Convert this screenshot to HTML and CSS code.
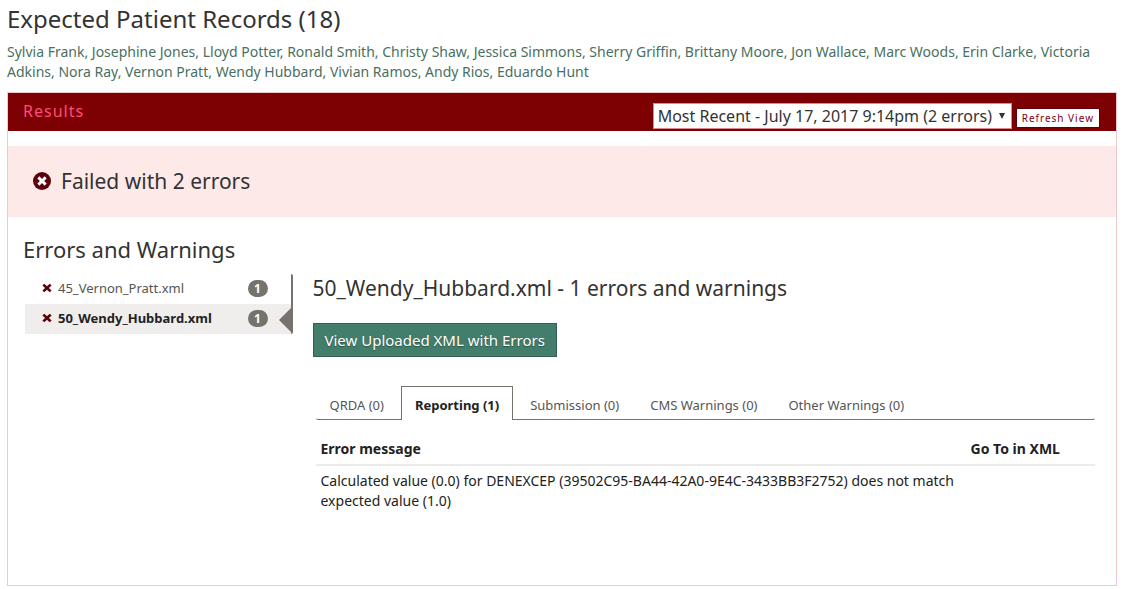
FILE: index.html
```html
<!DOCTYPE html>
<html lang="en">
<head>
  <meta charset="UTF-8">
  <meta name="viewport" content="width=device-width,initial-scale=1">
  <title>Test Execution Results</title>
  <link rel="stylesheet" href="styles.css">
</head>
<body>
  <svg class="sprite" aria-hidden="true">
    <symbol id="icon-times" viewBox="0 0 10 10">
      <path d="M2.3 .7 5 3.2 7.7 .7 9.6 2.4 6.9 5 9.6 7.6 7.7 9.3 5 6.8 2.3 9.3 .4 7.6 3.1 5 .4 2.4z"/>
    </symbol>
  </svg>

  <h1>Expected Patient Records (18)</h1>
  <p class="patients">
    <a href="#">Sylvia Frank</a>, <a href="#">Josephine Jones</a>, <a href="#">Lloyd Potter</a>, <a href="#">Ronald Smith</a>, <a href="#">Christy Shaw</a>, <a href="#">Jessica Simmons</a>, <a href="#">Sherry Griffin</a>, <a href="#">Brittany Moore</a>, <a href="#">Jon Wallace</a>, <a href="#">Marc Woods</a>, <a href="#">Erin Clarke</a>, <a href="#">Victoria Adkins</a>, <a href="#">Nora Ray</a>, <a href="#">Vernon Pratt</a>, <a href="#">Wendy Hubbard</a>, <a href="#">Vivian Ramos</a>, <a href="#">Andy Rios</a>, <a href="#">Eduardo Hunt</a>
  </p>

  <section class="panel">
    <header class="panel-heading">
      <h2 class="panel-title">Results</h2>
      <form class="panel-controls">
        <div class="select-wrap">
          <select class="execution-select" aria-label="Test execution">
            <option>Most Recent - July 17, 2017 9:14pm (2 errors)</option>
          </select>
        </div>
        <button type="button" class="btn-refresh">Refresh View</button>
      </form>
    </header>

    <div class="status-banner">
      <svg class="status-icon" viewBox="0 0 18 18" aria-hidden="true">
        <circle cx="9" cy="9" r="9" fill="#5c000c"/>
        <path d="M6.4 4.3 9 6.9 11.6 4.3 13.7 6.4 11.1 9 13.7 11.6 11.6 13.7 9 11.1 6.4 13.7 4.3 11.6 6.9 9 4.3 6.4z" fill="#fff"/>
      </svg>
      <span>Failed with 2 errors</span>
    </div>

    <div class="panel-body">
      <h2>Errors and Warnings</h2>
      <div class="results">
        <nav class="file-list">
          <a href="#" class="file">
            <svg class="file-icon" aria-hidden="true"><use href="#icon-times"/></svg>
            <span class="file-name">45_Vernon_Pratt.xml</span>
            <span class="badge">1</span>
          </a>
          <a href="#" class="file active">
            <svg class="file-icon" aria-hidden="true"><use href="#icon-times"/></svg>
            <span class="file-name">50_Wendy_Hubbard.xml</span>
            <span class="badge">1</span>
          </a>
        </nav>

        <div class="file-detail">
          <h3>50_Wendy_Hubbard.xml - 1 errors and warnings</h3>
          <button type="button" class="btn-primary">View Uploaded XML with Errors</button>

          <div class="error-tabs">
            <nav class="tabs">
              <a href="#" class="tab">QRDA (0)</a>
              <a href="#" class="tab active">Reporting (1)</a>
              <a href="#" class="tab">Submission (0)</a>
              <a href="#" class="tab">CMS Warnings (0)</a>
              <a href="#" class="tab">Other Warnings (0)</a>
            </nav>
            <table class="error-table">
              <thead>
                <tr>
                  <th class="col-message">Error message</th>
                  <th>Go To in XML</th>
                </tr>
              </thead>
              <tbody>
                <tr>
                  <td>Calculated value (0.0) for DENEXCEP (39502C95-BA44-42A0-9E4C-3433BB3F2752) does not match expected value (1.0)</td>
                  <td></td>
                </tr>
              </tbody>
            </table>
          </div>
        </div>
      </div>
    </div>
  </section>
</body>
</html>
```

FILE: styles.css
```css
* {
  box-sizing: border-box;
}
body {
  margin: 0;
  padding: 4px 26px 3px 7px;
  background: #fff;
  color: #222;
  font-family: "Noto Sans", "Open Sans", sans-serif;
  font-size: 14px;
  line-height: 20px;
}
a {
  color: inherit;
  text-decoration: none;
}
.sprite {
  display: none;
}
h1, h2, h3 {
  margin: 0;
  color: #333;
  font-weight: 400;
}
h1 {
  font-size: 24px;
  line-height: 30px;
}
h2 {
  font-size: 22px;
  line-height: 28px;
}
h3 {
  font-size: 21px;
  line-height: 28px;
}
.patients {
  margin: 8px 0 10px;
  color: #4a6f60;
}

/* results panel */
.panel {
  border: 1px solid #efc9cc;
}
.panel-heading {
  display: flex;
  align-items: flex-start;
  justify-content: space-between;
  height: 38px;
  padding: 8px 16px 0 15px;
  background: #7d0003;
}
.panel-title {
  color: #ff4d79;
  font-size: 16px;
  line-height: 20px;
  letter-spacing: 1px;
}
.panel-controls {
  display: flex;
  align-items: flex-end;
  gap: 4px;
  padding-top: 2px;
}
.select-wrap {
  display: flex;
  position: relative;
}
.select-wrap::after {
  content: "";
  position: absolute;
  top: 10px;
  right: 7px;
  border: 3px solid transparent;
  border-top: 6px solid #333;
  border-bottom: 0;
  pointer-events: none;
}
.execution-select {
  height: 26px;
  padding: 0 18px 0 4px;
  border: 1px solid #d98a90;
  border-radius: 0;
  appearance: none;
  background: #fff;
  color: #333;
  font-family: inherit;
  font-size: 16px;
}
.btn-refresh {
  height: 20px;
  margin-bottom: 1px;
  padding: 0 5px;
  border: 1px solid #5c000c;
  background: #fff;
  color: #7d0020;
  font-family: inherit;
  font-size: 10px;
  line-height: 18px;
  letter-spacing: 1px;
}
.status-banner {
  display: flex;
  align-items: center;
  gap: 10px;
  margin-top: 15px;
  padding: 20px 25px 21px;
  background: #fee9e9;
  color: #333;
  font-size: 21px;
  line-height: 30px;
}
.status-icon {
  width: 18px;
  height: 18px;
}
.panel-body {
  padding: 18px 15px 69px;
}
.results {
  display: flex;
  gap: 20px;
  margin-top: 11px;
}

/* list of uploaded files */
.file-list {
  flex: 0 0 25%;
  align-self: flex-start;
  border-right: 2px solid #75736c;
  border-radius: 2px;
  padding-left: 2px;
}
.file {
  display: flex;
  align-items: center;
  position: relative;
  height: 30px;
  padding: 0 23px 2px 17px;
  color: #555;
  font-size: 13px;
}
.file.active {
  background: #efeeed;
  color: #222;
  font-weight: 700;
}
.file.active::after {
  content: "";
  position: absolute;
  top: 4px;
  right: 0;
  border: 12px solid transparent;
  border-left-width: 0;
  border-right-color: #75736c;
}
.file-icon {
  width: 10px;
  height: 10px;
  margin-right: 6px;
  fill: #5c000c;
}
.badge {
  width: 20px;
  margin-left: auto;
  border-radius: 9px;
  background: #75736c;
  color: #fff;
  font-size: 12px;
  font-weight: 700;
  line-height: 17px;
  text-align: center;
}

/* details of the selected file */
.file-detail {
  flex: 1;
  min-width: 0;
}
.btn-primary {
  height: 34px;
  margin-top: 21px;
  padding: 0 11px;
  border: 1px solid #345f50;
  background: #437d6b;
  color: #fff;
  font-family: inherit;
  font-size: 15px;
  text-shadow: 0 1px 1px #2a5244;
}
.error-tabs {
  margin: 29px 6px 0 3px;
}
.tabs {
  display: flex;
  gap: 3px;
  border-bottom: 1px solid #75736c;
  border-radius: 2px;
}
.tab {
  height: 33px;
  padding: 8px 13px 0;
  border: 1px solid transparent;
  border-bottom: 0;
  color: #555;
  font-size: 13px;
}
.tab.active {
  height: 34px;
  margin-bottom: -1px;
  border-color: #75736c;
  background: #fff;
  color: #222;
  font-weight: 700;
}
.error-table {
  width: 100%;
  margin-top: 14px;
  border-collapse: collapse;
}
.error-table th,
.error-table td {
  padding: 5px;
  text-align: left;
  vertical-align: top;
}
.error-table th {
  border-bottom: 2px solid #ebebeb;
}
.col-message {
  width: 83.4%;
}
```
